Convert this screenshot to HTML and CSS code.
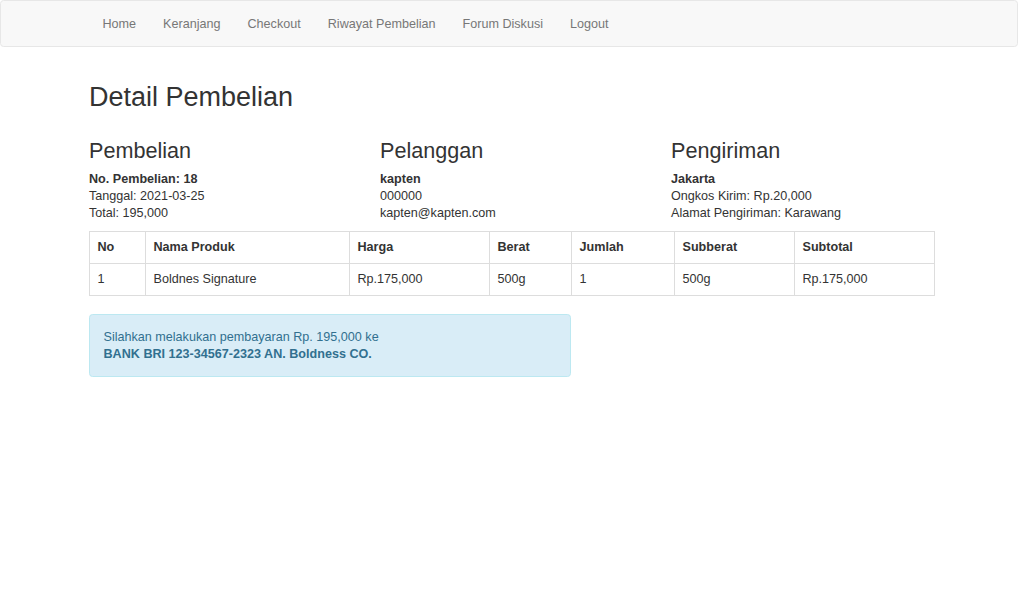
FILE: index.html
```html
<!DOCTYPE html>
<html lang="id">
<head>
<meta charset="utf-8">
<title>Detail Pembelian</title>
<link rel="stylesheet" href="styles.css">
</head>
<body>
<nav class="navbar">
  <div class="container">
    <ul class="nav">
      <li><a href="#">Home</a></li>
      <li><a href="#">Keranjang</a></li>
      <li><a href="#">Checkout</a></li>
      <li><a href="#">Riwayat Pembelian</a></li>
      <li><a href="#">Forum Diskusi</a></li>
      <li><a href="#">Logout</a></li>
    </ul>
  </div>
</nav>
<section class="container content">
  <h2 class="page-title">Detail Pembelian</h2>
  <div class="row">
    <div class="col">
      <h3>Pembelian</h3>
      <strong>No. Pembelian: 18</strong><br>
      Tanggal: 2021-03-25<br>
      Total: 195,000
    </div>
    <div class="col">
      <h3>Pelanggan</h3>
      <strong>kapten</strong><br>
      000000<br>
      kapten@kapten.com
    </div>
    <div class="col">
      <h3>Pengiriman</h3>
      <strong>Jakarta</strong><br>
      Ongkos Kirim: Rp.20,000<br>
      Alamat Pengiriman: Karawang
    </div>
  </div>
  <table class="table">
    <thead>
      <tr>
        <th class="c-no">No</th>
        <th class="c-nama">Nama Produk</th>
        <th class="c-harga">Harga</th>
        <th class="c-berat">Berat</th>
        <th class="c-jumlah">Jumlah</th>
        <th class="c-subberat">Subberat</th>
        <th class="c-subtotal">Subtotal</th>
      </tr>
    </thead>
    <tbody>
      <tr>
        <td>1</td>
        <td>Boldnes Signature</td>
        <td>Rp.175,000</td>
        <td>500g</td>
        <td>1</td>
        <td>500g</td>
        <td>Rp.175,000</td>
      </tr>
    </tbody>
  </table>
  <div class="alert">
    <p>Silahkan melakukan pembayaran Rp. 195,000 ke<br>
    <strong>BANK BRI 123-34567-2323 AN. Boldness CO.</strong></p>
  </div>
</section>
</body>
</html>
```
FILE: styles.css
```css
* { box-sizing: border-box; }
html, body { margin: 0; padding: 0; }
body {
  font-family: "Liberation Sans", Arial, Helvetica, sans-serif;
  font-size: 12.6px;
  line-height: 17px;
  color: #333;
  background: #fff;
}
.container {
  width: 846px;
  margin-left: 89px;
}
.content {
  display: flow-root;
}
.navbar {
  background: #f8f8f8;
  border: 1px solid #e7e7e7;
  border-radius: 3.6px;
  margin-bottom: 18px;
}
.nav {
  list-style: none;
  margin: 0 0 0 -1px;
  padding: 0;
  display: flex;
}
.nav a {
  display: block;
  padding: 14.5px 13.5px 13.5px;
  line-height: 17px;
  color: #777;
  text-decoration: none;
}
.page-title {
  font-size: 27px;
  font-weight: 500;
  line-height: 1.1;
  margin: 18px 0 9px;
}
.row {
  display: grid;
  grid-template-columns: repeat(3, 1fr);
  column-gap: 27px;
}
h3 {
  font-size: 21.6px;
  font-weight: 500;
  line-height: 1.1;
  margin: 17px 0 9px;
}
strong { font-weight: 700; }
.table {
  width: 100%;
  border-collapse: collapse;
  border-spacing: 0;
  margin: 9px 0 18px;
  table-layout: fixed;
}
.table th, .table td {
  border: 1px solid #ddd;
  padding: 7px 7.5px;
  text-align: left;
  line-height: 17px;
}
.table th { font-weight: 700; }
.c-no { width: 56px; }
.c-nama { width: 204px; }
.c-harga { width: 140px; }
.c-berat { width: 82px; }
.c-jumlah { width: 103px; }
.c-subberat { width: 120px; }
.c-subtotal { width: 140px; }
.alert {
  width: 482px;
  padding: 13.5px;
  background: #d9edf7;
  border: 1px solid #bce8f1;
  color: #31708f;
  border-radius: 3.6px;
}
.alert p { margin: 0; }
```
